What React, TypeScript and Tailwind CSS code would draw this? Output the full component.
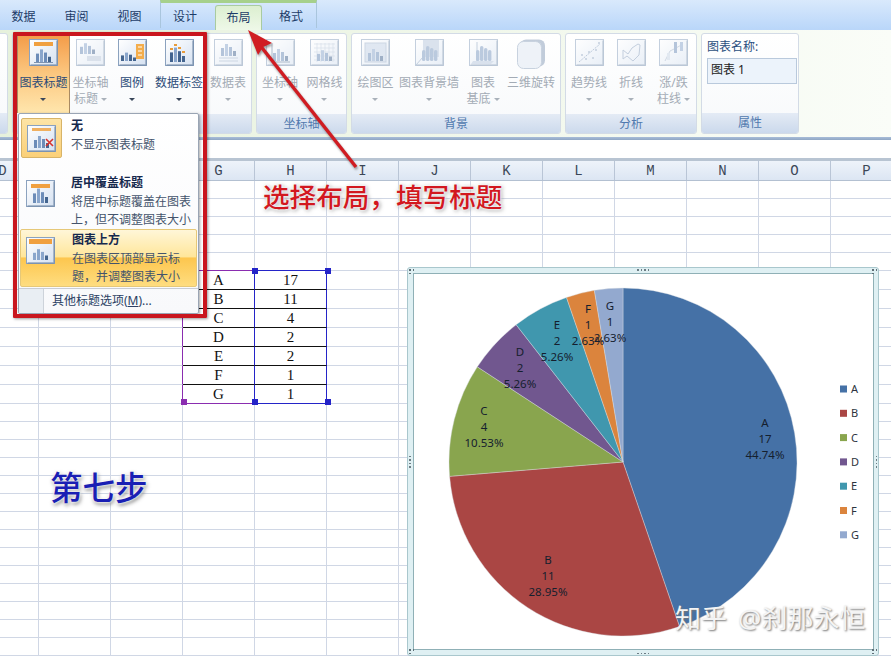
import React from 'react';

const FONT = "font-['Noto_Sans','Noto_Sans_CJK_SC',sans-serif]";

type IconKind =
  | 'title' | 'axisTitle' | 'legend' | 'labels' | 'table' | 'axis' | 'grid'
  | 'plot' | 'wall' | 'floor' | 'trend' | 'line' | 'updown' | 'none' | 'overlay' | 'above';

// little bar group used by most of the ribbon icons
const Bars = ({ x = 7, y = 22, c = '#6c8cb8', scale = 1 }: { x?: number; y?: number; c?: string; scale?: number }) => (
  <g fill={c}>
    <rect x={x} y={y - 8 * scale} width={3} height={8 * scale} />
    <rect x={x + 4} y={y - 12 * scale} width={3} height={12 * scale} fill="#8aa6cc" />
    <rect x={x + 8} y={y - 9 * scale} width={3} height={9 * scale} />
    <rect x={x + 12} y={y - 5 * scale} width={3} height={5 * scale} fill="#44658f" />
  </g>
);

const Fluted = () => (
  <g fill="#7a97bf">
    {[7, 11, 15, 19].map((x, i) => (
      <rect key={x} x={x} y={[11, 7, 9, 11][i]} width={3.4} height={[11, 15, 13, 11][i]} rx={1.6} />
    ))}
  </g>
);

const ChartIcon = ({ kind, disabled = false }: { kind: IconKind; disabled?: boolean }) => (
  <svg width="29" height="27" viewBox="0 0 29 27" className={disabled ? 'opacity-50' : ''}>
    <defs>
      <linearGradient id="frameFill" x1="0" y1="0" x2="1" y2="1">
        <stop offset="0" stopColor="#ffffff" />
        <stop offset="1" stopColor="#d5e1f1" />
      </linearGradient>
    </defs>
    <rect x="0.5" y="0.5" width="28" height="26" fill="url(#frameFill)" stroke="#8ba2bf" />
    <path d="M1.5 26h27M28 1.5v24" stroke="#6d84a3" />
    {kind === 'title' && (
      <>
        <rect x="5" y="3" width="19" height="4" fill="#f0a040" />
        <Bars y={23} scale={1.05} />
        <path d="M5 23.5h19" stroke="#7d93b0" />
      </>
    )}
    {kind === 'axisTitle' && (
      <>
        <Bars x={4} y={15} scale={0.9} />
        <rect x="11" y="17" width="14" height="5" fill="#b8c6d9" />
      </>
    )}
    {kind === 'legend' && (
      <>
        <Bars x={3} y={22} scale={0.7} c="#44658f" />
        <rect x="18" y="5" width="8" height="15" fill="#f3ad4c" />
        <path d="M20 8h4M20 12h4M20 16h4" stroke="#fff" />
      </>
    )}
    {kind === 'labels' && (
      <>
        <Bars x={5} y={23} scale={1.2} c="#41638f" />
        <g fill="#e89c3c">
          <rect x="5" y="9" width="3" height="2" />
          <rect x="9" y="5" width="3" height="2" />
          <rect x="13" y="8" width="3" height="2" />
          <rect x="17" y="12" width="3" height="2" />
        </g>
      </>
    )}
    {kind === 'table' && (
      <>
        <Bars x={7} y={17} scale={1} />
        <path d="M5 19h19M5 22h19" stroke="#9db0c9" />
      </>
    )}
    {kind === 'axis' && (
      <>
        <Bars x={7} y={22} />
        <path d="M6 4v19h18" stroke="#5f7898" fill="none" />
      </>
    )}
    {kind === 'grid' && (
      <>
        <path d="M4 5h21M4 9h21M4 13h21M4 17h21M4 21h21M7 4v19M11 4v19M15 4v19M19 4v19M23 4v19" stroke="#b3c2d6" strokeWidth="0.7" />
        <Bars x={7} y={22} scale={0.9} />
      </>
    )}
    {kind === 'plot' && (
      <>
        <rect x="4" y="4" width="21" height="19" fill="#c3d2e6" stroke="#9db0c9" />
        <Bars x={7} y={22} />
      </>
    )}
    {kind === 'wall' && (
      <>
        <path d="M8 1 24 1 24 18 8 18z" fill="#b7c7dd" />
        <path d="M1 26 8 18" stroke="#8ba2bf" />
        <Fluted />
      </>
    )}
    {kind === 'floor' && (
      <>
        <path d="M4 22h21l-3 3H2z" fill="#b7c7dd" />
        <path d="M8 3v19" stroke="#8ba2bf" />
        <Fluted />
      </>
    )}
    {kind === 'trend' && (
      <>
        <path d="M4 23 25 5" stroke="#7d97ba" strokeDasharray="2 1" />
        <g fill="#8aa0be">
          <circle cx="7" cy="16" r="1" /><circle cx="11" cy="20" r="1" /><circle cx="14" cy="13" r="1" />
          <circle cx="18" cy="19" r="1" /><circle cx="21" cy="11" r="1" /><circle cx="24" cy="4" r="1" />
        </g>
      </>
    )}
    {kind === 'line' && (
      <path d="M6 20 6 11 11 15 15 9 21 5 23 6 22 16 16 22 10 17z" fill="none" stroke="#8aa0be" />
    )}
    {kind === 'updown' && (
      <>
        <path d="M6 22 11 12 17 9 24 5" fill="none" stroke="#a3b4cb" />
        <rect x="15" y="3" width="3" height="11" fill="#6c8cb8" />
        <rect x="21" y="3" width="3" height="9" fill="#8aa6cc" />
        <rect x="8" y="14" width="3" height="7" fill="#c8d5e6" />
      </>
    )}
    {kind === 'none' && (
      <>
        <rect x="5" y="3" width="19" height="3" fill="#f0b060" />
        <Bars y={23} scale={1} />
        <path d="M19 14 26 21M26 14 19 21" stroke="#d8322c" strokeWidth="1.6" />
      </>
    )}
    {kind === 'overlay' && (
      <>
        <Bars y={23} scale={1.2} />
        <rect x="5" y="4" width="19" height="4" fill="#f0a040" />
      </>
    )}
    {kind === 'above' && (
      <>
        <rect x="3" y="2" width="23" height="5" fill="#f0a040" />
        <Bars y={23} scale={0.9} c="#8aa6cc" />
      </>
    )}
  </svg>
);

const RotateIcon = () => (
  <svg width="29" height="30" viewBox="0 0 29 30" className="opacity-70">
    <rect x="3" y="0.5" width="25" height="27" rx="6" fill="#a9b8cc" />
    <rect x="0.5" y="2.5" width="24" height="27" rx="6" fill="#e8eef6" stroke="#b2c0d2" />
  </svg>
);

const Caret = ({ disabled = false }: { disabled?: boolean }) => (
  <span
    className={`inline-block w-0 h-0 border-x-[3px] border-t-[3px] border-x-transparent ${
      disabled ? 'border-t-[#a9b1ba]' : 'border-t-[#39465a]'
    }`}
  />
);

type Btn = { icon: IconKind | 'rotate'; lines: string[]; w: number; disabled?: boolean; active?: boolean; noCaret?: boolean };

const RibbonButton = ({ icon, lines, w, disabled, active, noCaret }: Btn) => (
  <div
    style={{ width: w }}
    className={`shrink-0 flex flex-col items-center pt-[5px] h-[80px] ${
      active ? 'bg-gradient-to-b from-[#f39a45] via-[#fbc77f] to-[#ffe6ad] border-t border-x border-[#a98a62] -mt-px' : ''
    }`}
  >
    <div className="h-[27px] flex items-start">
      {icon === 'rotate' ? <RotateIcon /> : <ChartIcon kind={icon} disabled={disabled} />}
    </div>
    <div className={`mt-[9px] text-[12px] leading-[16px] whitespace-nowrap text-center ${disabled ? 'text-[#a3abb5]' : 'text-[#2b4b78]'}`}>
      <div>{lines[0]}</div>
      <div className="h-[16px] flex items-center justify-center gap-[3px]">
        {lines[1] && <span>{lines[1]}</span>}
        {!noCaret && <Caret disabled={disabled} />}
      </div>
    </div>
  </div>
);

const RibbonGroup = ({ label, w, children }: { label: string; w: number; children: React.ReactNode }) => (
  <div
    style={{ width: w }}
    className="shrink-0 h-[101px] flex flex-col rounded-[3px] border border-[#d3dbe6] bg-gradient-to-b from-white to-[#f7f9fb] overflow-hidden"
  >
    <div className="flex-1 flex">{children}</div>
    <div className="h-[20px] bg-gradient-to-b from-[#e4ebf5] to-[#cbd9ec] text-center text-[12px] leading-[20px] text-[#5079ae]">{label}</div>
  </div>
);

const tabs = [
  { label: '数据', cls: 'w-[53px]' },
  { label: '审阅', cls: 'w-[53px]' },
  { label: '视图', cls: 'w-[53px]' },
  { label: '设计', cls: 'w-[58px]' },
  { label: '布局', cls: 'ml-px w-[47px] rounded-t-[3px] border-x border-t border-[#a9cba0] bg-gradient-to-b from-[#dcefd0] to-[#eef8e8]' },
  { label: '格式', cls: 'w-[58px]' },
];

const TabBar = () => (
  <div className="relative h-[30px] flex bg-gradient-to-b from-[#d9e9fc] to-[#b9d6f9] -ml-[3px]">
    {tabs.map((t) => (
      <div key={t.label} className={`mt-[5px] h-[25px] text-center text-[12px] leading-[24px] text-[#1d3c68] ${t.cls}`}>
        {t.label}
      </div>
    ))}
    {/* chart tools context band */}
    <div className="absolute left-[163px] top-0 w-[157px] h-[28px] border-x border-[#a9c5dd] border-t-[3px] border-t-[#a6d08b]" />
  </div>
);

const Ribbon = () => (
  <div className="h-[107px] pt-[3px] flex gap-[4px] bg-gradient-to-r from-[#e6f1dc] via-[#f0f7ea] to-[#fafdf8] -ml-[4px]">
    <RibbonGroup label="" w={12}>
      <div />
    </RibbonGroup>
    <RibbonGroup label="标签" w={240}>
      <div className="flex pl-[4px]">
        <RibbonButton icon="title" lines={['图表标题']} w={53} active />
        <RibbonButton icon="axisTitle" lines={['坐标轴', '标题']} w={41} disabled />
        <RibbonButton icon="legend" lines={['图例']} w={42} />
        <RibbonButton icon="labels" lines={['数据标签']} w={52} />
        <RibbonButton icon="table" lines={['数据表']} w={46} disabled />
      </div>
    </RibbonGroup>
    <RibbonGroup label="坐标轴" w={91}>
      <RibbonButton icon="axis" lines={['坐标轴']} w={46} disabled />
      <RibbonButton icon="grid" lines={['网格线']} w={43} disabled />
    </RibbonGroup>
    <RibbonGroup label="背景" w={210}>
      <RibbonButton icon="plot" lines={['绘图区']} w={47} disabled />
      <RibbonButton icon="wall" lines={['图表背景墙']} w={60} disabled />
      <RibbonButton icon="floor" lines={['图表', '基底']} w={48} disabled />
      <RibbonButton icon="rotate" lines={['三维旋转']} w={48} disabled noCaret />
    </RibbonGroup>
    <RibbonGroup label="分析" w={132}>
      <RibbonButton icon="trend" lines={['趋势线']} w={46} disabled />
      <RibbonButton icon="line" lines={['折线']} w={38} disabled />
      <RibbonButton icon="updown" lines={['涨/跌', '柱线']} w={47} disabled />
    </RibbonGroup>
    <RibbonGroup label="属性" w={98}>
      <div className="pl-[5px] pt-[5px]">
        <div className="text-[12px] leading-[16px] text-[#2b4f80]">图表名称:</div>
        <div className="mt-[3px] w-[90px] h-[26px] border border-[#b9c9dc] bg-[#ecf3fb] pl-[3px] text-[12px] leading-[22px] text-[#222]">图表 1</div>
      </div>
    </RibbonGroup>
  </div>
);

const columns = ['D', 'E', 'F', 'G', 'H', 'I', 'J', 'K', 'L', 'M', 'N', 'O', 'P'];

const ColumnHeader = () => (
  <div className="flex -ml-[33px] h-[20px] bg-gradient-to-b from-[#eef3fa] to-[#dce6f3] border-b border-[#b3c0d1]">
    {columns.map((c) => (
      <div
        key={c}
        className="w-[72px] shrink-0 border-r border-[#b9c5d6] text-center text-[14px] leading-[20px] text-[#3c4757] font-['Liberation_Mono',monospace]"
      >
        {c}
      </div>
    ))}
  </div>
);

const tableRows: [string, number][] = [
  ['A', 17], ['B', 11], ['C', 4], ['D', 2], ['E', 2], ['F', 1], ['G', 1],
];

const SheetRow = ({ index }: { index: number }) => {
  const row = index >= 5 && index < 12 ? tableRows[index - 5] : null;
  const isLast = index === 11;
  return (
    <div className={`flex ${row ? 'h-[19px]' : 'h-[18px]'}`}>
      {columns.map((c) => {
        let rightCls = 'border-r-[#d0d7e5]';
        let bottomCls = 'border-b-[#d0d7e5]';
        if (row && c === 'F') rightCls = 'border-r-[#8a2db0]';
        if (row && c === 'G') rightCls = 'border-r-[#2424c8]';
        if (row && c === 'H') rightCls = 'border-r-[#2424c8]';
        if (row && (c === 'G' || c === 'H')) bottomCls = 'border-b-[#111]';
        if ((index === 4 || isLast) && c === 'G') bottomCls = 'border-b-[#8a2db0]';
        if ((index === 4 || isLast) && c === 'H') bottomCls = 'border-b-[#2424c8]';
        return (
          <div
            key={c}
            className={`w-[72px] shrink-0 border-r border-b ${rightCls} ${bottomCls} text-center text-[15px] leading-[19px] text-[#111] font-['Liberation_Serif',serif]`}
          >
            {row && c === 'G' ? row[0] : null}
            {row && c === 'H' ? row[1] : null}
          </div>
        );
      })}
    </div>
  );
};

const Sheet = () => (
  <div className="-ml-[33px]">
    {Array.from({ length: 27 }, (_, i) => (
      <SheetRow key={i} index={i} />
    ))}
  </div>
);

const MenuItem = ({
  icon, title, lines, hot, boxed,
}: { icon: IconKind; title: string; lines: string[]; hot?: boolean; boxed?: boolean }) => (
  <div
    className={`flex shrink-0 mx-px ${
      hot
        ? 'h-[58px] rounded-[2px] border border-[#e6c878] bg-[linear-gradient(#fff6d8_0%,#ffe69a_48%,#fdc64e_50%,#fedd80_100%)]'
        : ''
    } ${lines.length > 1 && !hot ? 'h-[55px]' : ''} ${boxed ? 'h-[58px]' : ''}`}
  >
    <div className="w-[51px] shrink-0">
      <div
        className={
          boxed
            ? 'mt-[2px] ml-[1px] w-[41px] h-[40px] rounded-[2px] border border-[#d8b468] bg-gradient-to-b from-[#fde4a6] to-[#fbd078] flex items-center justify-center'
            : hot
              ? 'mt-[7px] ml-[5px]'
              : 'mt-[6px] ml-[6px]'
        }
      >
        <ChartIcon kind={icon} />
      </div>
    </div>
    <div className={`text-[12px] leading-[18.5px] text-[#44546c] whitespace-nowrap ${hot || boxed ? 'pt-px' : ''}`}>
      <div className="font-bold text-[#16294d]">{title}</div>
      {lines.map((l) => (
        <div key={l}>{l}</div>
      ))}
    </div>
  </div>
);

const TitleMenu = () => (
  <div className="absolute left-[18px] top-[113px] w-[181px] h-[201px] rounded-[2px] border border-[#9aa5b4] bg-gradient-to-b from-white to-[#f8f9fb] flex flex-col pt-[2px] shadow-[1px_1px_3px_rgba(0,0,0,0.35)]">
    <MenuItem icon="none" title="无" lines={['不显示图表标题']} boxed />
    <MenuItem icon="overlay" title="居中覆盖标题" lines={['将居中标题覆盖在图表', '上，但不调整图表大小']} />
    <MenuItem icon="above" title="图表上方" lines={['在图表区顶部显示标', '题，并调整图表大小']} hot />
    <div className="flex-1 flex mt-px border-t border-[#c8cdd4]">
      <div className="w-[25px] bg-[#e9eef3] border-r border-[#cdd3da]" />
      <div className="pl-[8px] text-[12px] leading-[24px] text-[#2b3f63]">
        其他标题选项(<span className="underline">M</span>)...
      </div>
    </div>
  </div>
);

const pieData = [
  { name: 'A', value: 17, pct: '44.74%', color: '#4571a6', at: [765, 423] },
  { name: 'B', value: 11, pct: '28.95%', color: '#aa4644', at: [548, 560] },
  { name: 'C', value: 4, pct: '10.53%', color: '#89a54e', at: [484, 411] },
  { name: 'D', value: 2, pct: '5.26%', color: '#71578f', at: [520, 352] },
  { name: 'E', value: 2, pct: '5.26%', color: '#4097ae', at: [557, 325] },
  { name: 'F', value: 1, pct: '2.63%', color: '#db843d', at: [588, 309] },
  { name: 'G', value: 1, pct: '2.63%', color: '#93a9cf', at: [610, 306] },
];

const slicePath = (from: number, to: number) => {
  const cx = 623, cy = 462, r = 174;
  const p = (t: number) => {
    const a = (t / 38) * Math.PI * 2;
    return `${cx + r * Math.sin(a)} ${cy - r * Math.cos(a)}`;
  };
  return `M${cx} ${cy}L${p(from)}A${r} ${r} 0 ${to - from > 19 ? 1 : 0} 1 ${p(to)}Z`;
};

const Pie = () => {
  let acc = 0;
  return (
    <svg width="461" height="377" viewBox="413 273 461 377" className="block">
      {pieData.map((d) => {
        const path = slicePath(acc, acc + d.value);
        acc += d.value;
        return <path key={d.name} d={path} fill={d.color} stroke="#d9dde3" strokeWidth="0.4" />;
      })}
      <g fontSize="11.5" textAnchor="middle" fill="#15202e" fontFamily="'Noto Sans', sans-serif">
        {pieData.map((d) => (
          <g key={d.name}>
            <text x={d.at[0]} y={d.at[1] + 4}>{d.name}</text>
            <text x={d.at[0]} y={d.at[1] + 20}>{d.value}</text>
            <text x={d.at[0]} y={d.at[1] + 36}>{d.pct}</text>
          </g>
        ))}
      </g>
      <g fontSize="11" fill="#2c3440" fontFamily="'Noto Sans', sans-serif">
        {pieData.map((d, i) => (
          <g key={d.name}>
            <rect x={840} y={385.5 + i * 24.3} width={7} height={7} fill={d.color} />
            <text x={851} y={393 + i * 24.3}>{d.name}</text>
          </g>
        ))}
      </g>
    </svg>
  );
};

const Dots = ({ vertical = false }: { vertical?: boolean }) => (
  <div className={`flex gap-[2px] ${vertical ? 'flex-col' : ''}`}>
    {[0, 1, 2, 3].map((i) => (
      <span key={i} className="w-[1.5px] h-[1.5px] bg-[#6d7d85]" />
    ))}
  </div>
);

const CornerDots = ({ cls }: { cls: string }) => (
  <div className={`absolute grid grid-cols-2 gap-[2px] ${cls}`}>
    {[0, 1, 2].map((i) => (
      <span key={i} className="w-[1.5px] h-[1.5px] bg-[#5f6f77]" />
    ))}
  </div>
);

const Chart = () => (
  <div className="absolute left-[407px] top-[267px] w-[472px] h-[389px] rounded-[3px] border border-[#a9c7cd] bg-[#dff0f3]">
    <div className="absolute left-[5px] top-[5px] w-[461px] h-[377px] border border-[#8fb0b6] bg-white overflow-hidden">
      <div className="-ml-px -mt-px">
        <Pie />
      </div>
    </div>
    <div className="absolute top-[1px] left-1/2 -translate-x-1/2"><Dots /></div>
    <div className="absolute bottom-[1px] left-1/2 -translate-x-1/2"><Dots /></div>
    <div className="absolute left-[1px] top-1/2 -translate-y-1/2"><Dots vertical /></div>
    <div className="absolute right-[1px] top-1/2 -translate-y-1/2"><Dots vertical /></div>
    <CornerDots cls="left-[1px] top-[1px]" />
    <CornerDots cls="right-[1px] top-[1px]" />
    <CornerDots cls="left-[1px] bottom-[1px]" />
    <CornerDots cls="right-[1px] bottom-[1px]" />
  </div>
);

const Handle = ({ cls }: { cls: string }) => <div className={`absolute w-[6px] h-[6px] ${cls}`} />;

const Arrow = () => (
  <svg className="absolute left-[230px] top-[20px] drop-shadow-[1px_2px_1px_rgba(90,90,90,0.6)]" width="140" height="160" viewBox="230 20 140 160">
    <path d="M356 167 259 44" stroke="#d01c22" strokeWidth="3.4" />
    <path d="M248 30 272 43 263 47 258 55 Z" fill="#d01c22" />
  </svg>
);

export default function App() {
  return (
    <div className={`relative w-[891px] h-[656px] overflow-hidden bg-white ${FONT}`}>
      <TabBar />
      <Ribbon />
      <div className="h-[3px] bg-gradient-to-b from-[#a8bdd8] to-[#8fa6c4]" />
      <div className="h-[18px] bg-white" />
      <div className="h-[3px] bg-[#b8c4d2]" />
      <ColumnHeader />
      <Sheet />

      {/* selection handles on the data range */}
      <Handle cls="left-[252px] top-[268px] bg-[#2424c8]" />
      <Handle cls="left-[325px] top-[268px] bg-[#2424c8]" />
      <Handle cls="left-[181px] top-[399px] bg-[#8a2db0]" />
      <Handle cls="left-[252px] top-[399px] bg-[#2424c8]" />
      <Handle cls="left-[325px] top-[399px] bg-[#2424c8]" />

      <TitleMenu />
      <div className="absolute left-[13px] top-[32px] w-[194px] h-[286px] border-[4px] border-[#c9161e] rounded-[1px] shadow-[1px_1px_3px_rgba(0,0,0,0.4)]" />

      <Chart />
      <Arrow />

      <div className="absolute left-[263px] top-[179px] text-[26.6px] leading-[36px] font-medium text-[#d2181f] whitespace-nowrap [text-shadow:0_0_3px_#fff,0_0_3px_#fff,1px_1px_4px_#777]">
        选择布局，填写标题
      </div>
      <div className="absolute left-[50px] top-[468px] text-[32.5px] leading-[40px] font-medium text-[#1a1fb4] whitespace-nowrap [text-shadow:0_0_3px_#fff,0_0_3px_#fff,1px_2px_4px_#666]">
        第七步
      </div>
      <div className="absolute left-[675px] top-[600px] text-[26px] leading-[36px] text-[#f4f4f4] whitespace-nowrap [text-shadow:1px_1px_2px_#777]">
        知乎<span className="ml-[11px]">@刹那永恒</span>
      </div>
    </div>
  );
}
